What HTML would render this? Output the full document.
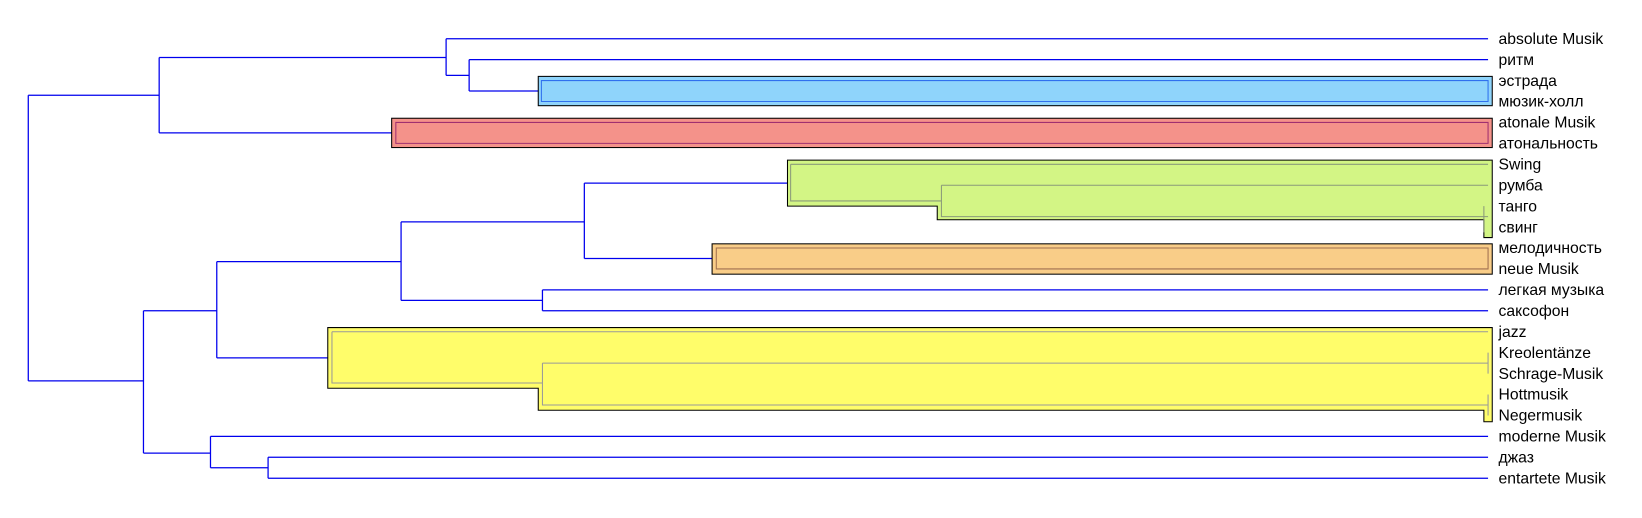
<!DOCTYPE html>
<html><head><meta charset="utf-8"><style>
html,body{margin:0;padding:0;background:#fff;}
svg{display:block}
text{font-family:"Liberation Sans","DejaVu Sans",sans-serif;font-size:15px;fill:#000;}
</style></head><body>
<svg width="1642" height="518" viewBox="0 0 1568 495" preserveAspectRatio="none" xmlns="http://www.w3.org/2000/svg">
<g fill="none" stroke="#0000ee" stroke-width="1.2">
<path d="M426 37H1421 M448 57H1421 M426 37V72 M448 57V87 M448 87H517 M426 72H448"/>
<path d="M152 55H426 M152 55V127 M152 127H378 M27 91H152 M27 91V364 M27 364H137"/>
<path d="M137 297V433 M137 297H207 M137 433H201"/>
<path d="M207 250V342 M207 250H383 M207 342H314"/>
<path d="M383 212V287 M383 212H558 M383 287H518"/>
<path d="M518 277V297 M518 277H1421 M518 297H1421"/>
<path d="M558 175V247 M558 175H753 M558 247H681"/>
<path d="M201 417V447 M201 417H1421 M201 447H256 M256 437V457 M256 437H1421 M256 457H1421"/>
</g>
<g stroke="#000" stroke-width="1">
<rect x="514" y="73" width="911" height="28" fill="#8fd4fb"/>
<rect x="374" y="113" width="1051" height="28" fill="#f4928a"/>
<path d="M752 153H1425V227H1417V210H895V197H752Z" fill="#d3f585"/>
<rect x="680" y="233" width="745" height="29" fill="#f9cd88"/>
<path d="M313 313H1425V403H1417V392H514V371H313Z" fill="#fffd6a"/>
</g>
<g fill="none" stroke-width="1">
<path d="M517 77H1421V97H517Z" stroke="#3070ee"/>
<path d="M378 117H1421V137H378Z" stroke="#a03070"/>
<path d="M755 157H1421 M755 157V192H899 M899 177H1421 M899 177V207H1421 M1417 197V222" stroke="#8a9a7a"/>
<path d="M684 237H1421V257H684Z" stroke="#a07050"/>
<path d="M317 317H1421 M317 317V366H518 M518 347H1421 M518 347V387H1421 M1421 337V357 M1421 377V397" stroke="#999"/>
</g>
<g>
<text x="1431" y="42">absolute Musik</text>
<text x="1431" y="62">ритм</text>
<text x="1431" y="82">эстрада</text>
<text x="1431" y="102">мюзик-холл</text>
<text x="1431" y="122">atonale Musik</text>
<text x="1431" y="142">атональность</text>
<text x="1431" y="162">Swing</text>
<text x="1431" y="182">румба</text>
<text x="1431" y="202">танго</text>
<text x="1431" y="222">свинг</text>
<text x="1431" y="242">мелодичность</text>
<text x="1431" y="262">neue Musik</text>
<text x="1431" y="282">легкая музыка</text>
<text x="1431" y="302">саксофон</text>
<text x="1431" y="322">jazz</text>
<text x="1431" y="342">Kreolentänze</text>
<text x="1431" y="362">Schrage-Musik</text>
<text x="1431" y="382">Hottmusik</text>
<text x="1431" y="402">Negermusik</text>
<text x="1431" y="422">moderne Musik</text>
<text x="1431" y="442">джаз</text>
<text x="1431" y="462">entartete Musik</text>
</g>
</svg>
</body></html>
